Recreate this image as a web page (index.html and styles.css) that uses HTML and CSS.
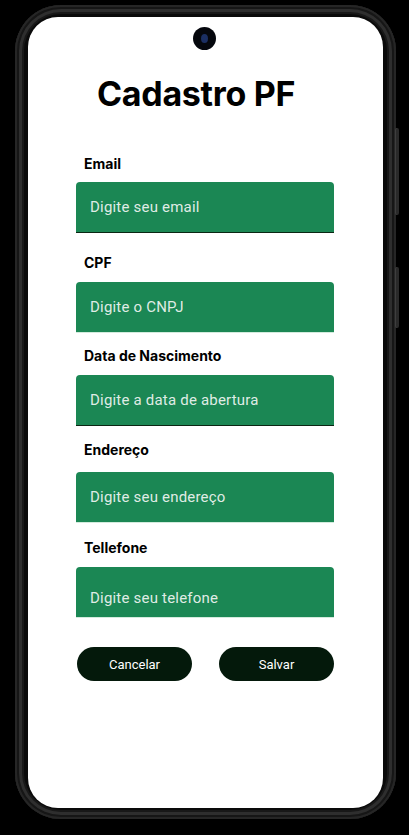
FILE: index.html
```html
<!DOCTYPE html>
<html lang="pt-BR">
<head>
<meta charset="utf-8">
<title>Cadastro PF</title>
<link rel="stylesheet" href="styles.css">
</head>
<body>
<div class="phone">
  <span class="side-btn side-btn--power"></span>
  <span class="side-btn side-btn--vol"></span>
  <div class="screen">
    <span class="camera"><span class="camera-lens"></span></span>
    <h1 class="title">Cadastro PF</h1>
    <form class="form">
      <div class="group group--email">
        <label class="label">Email</label>
        <div class="field field--dark"><span class="placeholder">Digite seu email</span></div>
      </div>
      <div class="group group--cpf">
        <label class="label">CPF</label>
        <div class="field field--light"><span class="placeholder">Digite o CNPJ</span></div>
      </div>
      <div class="group group--data">
        <label class="label">Data de Nascimento</label>
        <div class="field field--dark"><span class="placeholder">Digite a data de abertura</span></div>
      </div>
      <div class="group group--end">
        <label class="label">Endereço</label>
        <div class="field field--light"><span class="placeholder">Digite seu endereço</span></div>
      </div>
      <div class="group group--tel">
        <label class="label">Tellefone</label>
        <div class="field field--light field--low"><span class="placeholder">Digite seu telefone</span></div>
      </div>
      <div class="actions">
        <button type="button" class="btn">Cancelar</button>
        <button type="button" class="btn">Salvar</button>
      </div>
    </form>
  </div>
</div>
</body>
</html>
```

FILE: styles.css
```css
html, body {
  margin: 0;
  padding: 0;
  background: #000;
}
body {
  width: 409px;
  height: 835px;
  overflow: hidden;
}
.phone {
  position: relative;
  box-sizing: border-box;
  width: 381px;
  height: 814px;
  margin: 5px 0 0 15px;
  padding: 12px 13px 10px 13px;
  border-radius: 46px;
  background: #0a0a0a;
  box-shadow:
    inset 0 0 0 2px #262626,
    inset 0 0 0 4px #161616,
    inset 0 0 0 7px #2e2e2e,
    inset 0 0 0 9px #181818;
}
.side-btn {
  position: absolute;
  right: -3px;
  width: 4px;
  border-radius: 2px;
  background: #2a2a2a;
  box-shadow: inset 1px 0 0 #3e3e3e;
}
.side-btn--power { top: 123px; height: 87px; }
.side-btn--vol { top: 262px; height: 61px; }
.screen {
  position: relative;
  box-sizing: border-box;
  height: 791px;
  background: #fff;
  border-radius: 30px;
  padding: 57px 49px 0 48px;
}
.camera {
  position: absolute;
  top: 10px;
  left: 165px;
  width: 23px;
  height: 23px;
  border-radius: 50%;
  background: #05070d;
  display: flex;
  align-items: center;
  justify-content: center;
}
.camera-lens {
  width: 7px;
  height: 9px;
  border-radius: 50%;
  background: #1b2f63;
}
.title {
  margin: 0 0 41px 21px;
  font-family: Inter, "Liberation Sans", sans-serif;
  font-weight: 700;
  font-size: 34px;
  line-height: 40px;
  color: #000;
  letter-spacing: -0.3px;
}
.form {
  display: flex;
  flex-direction: column;
}
.group {
  display: flex;
  flex-direction: column;
}
.group--cpf { margin-top: 21px; }
.group--data { margin-top: 14px; }
.group--end { margin-top: 15px; }
.group--tel { margin-top: 16px; }
.label {
  display: block;
  margin: 0 0 9px 8px;
  font-family: Inter, "Liberation Sans", sans-serif;
  font-weight: 700;
  font-size: 14px;
  line-height: 18px;
  color: #000;
}
.group--cpf .label, .group--data .label, .group--tel .label { margin-bottom: 10px; }
.group--end .label { margin-bottom: 13px; }
.field {
  box-sizing: border-box;
  height: 51px;
  background: #1b8754;
  border-radius: 4px 4px 0 0;
  display: flex;
  align-items: center;
  padding: 0 14px;
}
.field--dark { border-bottom: 1px solid #0b2613; }
.field--light { border-bottom: 1px solid #d3ebdd; }
.field--low { padding-top: 12px; }
.placeholder {
  font-family: Roboto, "Liberation Sans", sans-serif;
  font-size: 15px;
  letter-spacing: 0.2px;
  color: rgba(244, 247, 245, 0.92);
}
.actions {
  display: flex;
  justify-content: space-between;
  margin-top: 29px;
  padding: 0 0 0 1px;
}
.btn {
  width: 115px;
  height: 34px;
  border: none;
  border-radius: 17px;
  background: #04190b;
  color: #fff;
  font-family: Roboto, "Liberation Sans", sans-serif;
  font-weight: 400;
  font-size: 13px;
  cursor: pointer;
}
```
